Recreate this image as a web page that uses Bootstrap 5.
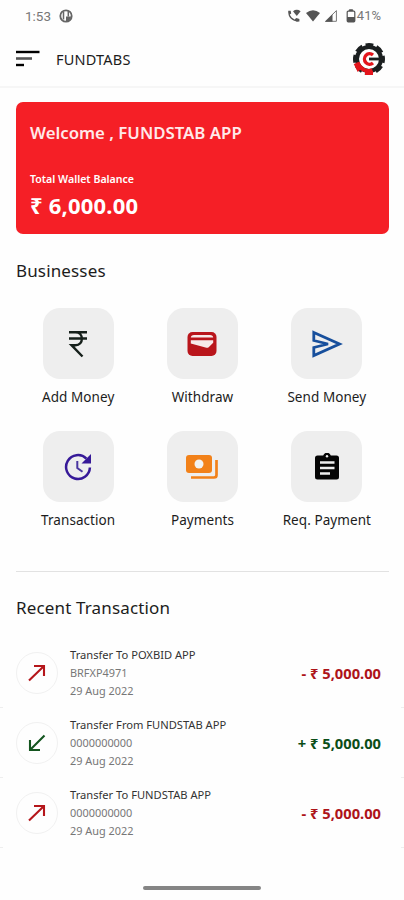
<!DOCTYPE html>
<html lang="en">
<head>
<meta charset="utf-8">
<meta name="viewport" content="width=device-width, initial-scale=1">
<title>Fundtabs</title>
<link href="https://cdn.jsdelivr.net/npm/bootstrap@5.3.0/dist/css/bootstrap.min.css" rel="stylesheet">
<style>
body{font-family:"Noto Sans",sans-serif;color:#1c1c1c;background:#fefefe;width:404px;height:900px;overflow:hidden}
svg{display:block;flex:none}
.status{height:32px;padding:0 23px 0 25px;font-family:Roboto,sans-serif;font-size:13.5px;color:#777;line-height:32px}
.pct{margin-left:1px;font-size:13px}
.topbar{height:56px;padding:0 18px 0 16px;border-bottom:2px solid #f6f6f6}
.brand{font-size:14.500px;letter-spacing:.2px;line-height:20px;margin-left:16px}
.wallet{height:132px;margin-top:14px;padding:20px 14px 0;background:#f51f26;border-radius:7px;color:#fff}
.hello{font-size:16.800px;font-weight:600;line-height:22px;color:#ffe9e9}
.wl{font-size:10.600px;font-weight:600;line-height:14px;margin-top:28px}
.bal{font-size:22px;font-weight:700;line-height:28px;margin-top:5px;letter-spacing:.2px}
.sec{font-size:17px;font-weight:400;line-height:24px;letter-spacing:.15px}
.tile{width:71px;height:71px;border-radius:17px;background:#eee}
.lbl{font-size:13.500px;line-height:18px;margin-top:9px;white-space:nowrap;letter-spacing:.07px}
.svc{height:123px}
.rule{height:1px;background:#e2e2e2}
.tx{height:70px;padding:0 23px 0 16px;background:linear-gradient(90deg,#eee 3px,transparent 3px,transparent 401px,#eee 401px) bottom/100% 1px no-repeat}
.ring{width:42px;height:42px;border:1px solid #f1f1f1;flex:none}
.txt{margin-left:12px;font-size:10.900px;line-height:18px;color:#777;white-space:nowrap}
.ttl{color:#333;font-size:11.150px}
.amt{font-size:14.700px;font-weight:700;white-space:nowrap}
.out{color:#ad1419}
.inn{color:#0b4d17}
.home{width:118px;height:4px;background:#858585;border-radius:2px}
</style>
</head>
<body>
<div class="status d-flex align-items-center">
  <span>1:53</span>
  <svg class="ms-2" width="14" height="14" viewBox="0 0 14 14"><circle cx="7" cy="7" r="5.700" fill="none" stroke="#666" stroke-width="1.800"/><path d="M7 7.500h5.500L10 12l-3 1z" fill="#666"/><path d="M4.500 2.500v8" stroke="#666" stroke-width="1.500"/><path d="M9.300 2v5.500" stroke="#666" stroke-width="1.500"/></svg>
  <div class="ms-auto d-flex align-items-center">
    <svg width="15" height="14" viewBox="0 0 15 14"><path d="M2 2.200c-.6 5.200 3.300 9.600 9.300 9.600" fill="none" stroke="#555" stroke-width="1.300"/><path d="M1.200 1.800h2.500l.5 2.600-1.700 1.300zM7.700 10.300l1.700-1.200 3 .8v2.500H9z" fill="#555"/><path d="M6 2.200q3.800-2.800 7.600 0L9.800 7z" fill="#555"/></svg>
    <svg class="ms-1" width="14" height="14" viewBox="0 0 14 14"><path d="M0 4Q7-1.500 14 4L7 12.500z" fill="#555"/></svg>
    <svg class="ms-1" width="14" height="14" viewBox="0 0 14 14"><path d="M1.500 12.300h10.900V1.600z" fill="none" stroke="#777"/><path d="M1 12.800h7.500V5.200z" fill="#555"/></svg>
    <svg class="ms-2" width="10" height="14" viewBox="0 0 10 14"><path d="M3.300 2V.8h3.400V2" fill="#555" stroke="#555"/><rect x="1.200" y="2.200" width="7.600" height="10.600" rx="1" fill="none" stroke="#555" stroke-width="1.200"/><path d="M1 8h8v5H1z" fill="#555"/></svg>
    <span class="pct">41%</span>
  </div>
</div>
<header class="topbar d-flex align-items-center">
  <svg width="24" height="18" viewBox="0 0 24 18"><path d="M0 2h23.500" stroke="#000" stroke-width="2.400"/><path d="M0 8.500h16" stroke="#555" stroke-width="2.600"/><path d="M0 15h8" stroke="#000" stroke-width="2.400"/></svg>
  <span class="brand">FUNDTABS</span>
  <svg class="ms-auto" width="34" height="34" viewBox="-17 -17 34 34">
    <circle r="12" fill="none" stroke="#1b1f20" stroke-width="4"/>
    <circle r="14.300" fill="none" stroke="#1b1f20" stroke-width="3.400" stroke-dasharray="7.700 3.532" stroke-dashoffset="3.850"/>
    <path d="M-11.500 3.400A12 12 0 0 0 3.500 11.500" fill="none" stroke="#e3151c" stroke-width="4"/>
    <path d="M-15.300 5l4-1.200 3.500 6-3.500 3.200zM-4 12h8v4h-8z" fill="#e3151c"/>
    <path d="M4-4A5.200 5.200 0 1 0 4 4" fill="none" stroke="#e3151c" stroke-width="3.400"/>
    <path d="M0 0h14" stroke="#1b1f20" stroke-width="2.800"/>
  </svg>
</header>
<main>
  <div class="px-3" style="width:405px">
    <section class="wallet">
      <div class="hello">Welcome , FUNDSTAB APP</div>
      <div class="wl">Total Wallet Balance</div>
      <div class="bal">₹ 6,000.00</div>
    </section>
    <h2 class="sec mb-0" style="margin-top:25px">Businesses</h2>
    <div class="row g-0" style="margin-top:25px">
      <div class="col-4 svc d-flex flex-column align-items-center">
        <div class="tile d-flex align-items-center justify-content-center"><svg width="28" height="28" viewBox="0 0 28 28"><path d="M5 2.200h18M5 8.500h18M6 2.200h5.500c8.500 0 8.500 13 0 13H7.500l11 11.300" fill="none" stroke="#16201b" stroke-width="2.400"/></svg></div>
        <div class="lbl">Add Money</div>
      </div>
      <div class="col-4 svc d-flex flex-column align-items-center">
        <div class="tile d-flex align-items-center justify-content-center"><svg width="30" height="26" viewBox="0 0 30 26"><rect x=".5" y="1" width="29" height="24" rx="5" fill="#b9151b"/><path d="M3.800 6.500Q4 4 7 4h16q3 0 3.200 2.500zM3.800 9.200h22.400v2.500l-4.500 4.500q-1 .8-2.300.5L3.800 12.500z" fill="#f7e9e9"/></svg></div>
        <div class="lbl">Withdraw</div>
      </div>
      <div class="col-4 svc d-flex flex-column align-items-center">
        <div class="tile d-flex align-items-center justify-content-center"><svg width="32" height="28" viewBox="0 0 32 28"><path d="M2.800 2.500L28.500 14 2.800 25.500V17.500L17 14 2.800 10.500z" fill="none" stroke="#174f9c" stroke-width="2.800"/></svg></div>
        <div class="lbl">Send Money</div>
      </div>
      <div class="col-4 svc d-flex flex-column align-items-center">
        <div class="tile d-flex align-items-center justify-content-center"><svg width="28" height="28" viewBox="0 0 28 28"><path d="M22.400 5.600A11.900 11.900 0 1 0 25.900 14.500" fill="none" stroke="#361998" stroke-width="2.500"/><path d="M27 1v9.500h-9.500z" fill="#361998"/><path d="M13.300 8v7l5.200 3.700" fill="none" stroke="#4a36a0" stroke-width="2"/></svg></div>
        <div class="lbl">Transaction</div>
      </div>
      <div class="col-4 svc d-flex flex-column align-items-center">
        <div class="tile d-flex align-items-center justify-content-center"><svg width="34" height="26" viewBox="0 0 34 26"><rect x="1" y="1" width="26" height="18" rx="3" fill="#f28119"/><circle cx="14" cy="10" r="4.500" fill="#f2f2f2"/><path d="M31.500 6v15q0 2.500-2.500 2.500H6" fill="none" stroke="#f28119" stroke-width="2.700"/></svg></div>
        <div class="lbl">Payments</div>
      </div>
      <div class="col-4 svc d-flex flex-column align-items-center">
        <div class="tile d-flex align-items-center justify-content-center"><svg width="26" height="28" viewBox="0 0 26 28"><path d="M3.500 2.500h5.700a4 4 0 0 1 7.600 0h5.700Q25 2.500 25 5v19q0 2.500-2.500 2.500h-19Q1 26.500 1 24V5Q1 2.500 3.500 2.500z" fill="#050505"/><circle cx="13" cy="3.200" r="1.200" fill="#eee"/><path d="M6 9.500h14.500M6 15h14.500M6 20.500h10" stroke="#eee" stroke-width="2.600"/></svg></div>
        <div class="lbl">Req. Payment</div>
      </div>
    </div>
    <div class="rule" style="margin-top:17px"></div>
    <h2 class="sec mb-0" style="margin-top:24px">Recent Transaction</h2>
  </div>
  <div style="margin-top:18px">
    <div class="tx d-flex align-items-center">
      <div class="ring rounded-circle d-flex align-items-center justify-content-center"><svg width="20" height="20" viewBox="0 0 20 20"><path d="M2 17.500L17 3M7 3h10v10" fill="none" stroke="#b5161b" stroke-width="2.100"/></svg></div>
      <div class="txt"><div class="ttl">Transfer To POXBID APP</div><div>BRFXP4971</div><div>29 Aug 2022</div></div>
      <div class="amt out ms-auto">- ₹ 5,000.00</div>
    </div>
    <div class="tx d-flex align-items-center">
      <div class="ring rounded-circle d-flex align-items-center justify-content-center"><svg width="20" height="20" viewBox="0 0 20 20"><path d="M17.500 2.500L3 17M3 7v10h10" fill="none" stroke="#14551f" stroke-width="2.100"/></svg></div>
      <div class="txt"><div class="ttl">Transfer From FUNDSTAB APP</div><div>0000000000</div><div>29 Aug 2022</div></div>
      <div class="amt inn ms-auto">+ ₹ 5,000.00</div>
    </div>
    <div class="tx d-flex align-items-center">
      <div class="ring rounded-circle d-flex align-items-center justify-content-center"><svg width="20" height="20" viewBox="0 0 20 20"><path d="M2 17.500L17 3M7 3h10v10" fill="none" stroke="#b5161b" stroke-width="2.100"/></svg></div>
      <div class="txt"><div class="ttl">Transfer To FUNDSTAB APP</div><div>0000000000</div><div>29 Aug 2022</div></div>
      <div class="amt out ms-auto">- ₹ 5,000.00</div>
    </div>
  </div>
  <div class="home mx-auto" style="margin-top:38px"></div>
</main>
<script src="https://cdn.jsdelivr.net/npm/bootstrap@5.3.0/dist/js/bootstrap.bundle.min.js"></script>
</body>
</html>
